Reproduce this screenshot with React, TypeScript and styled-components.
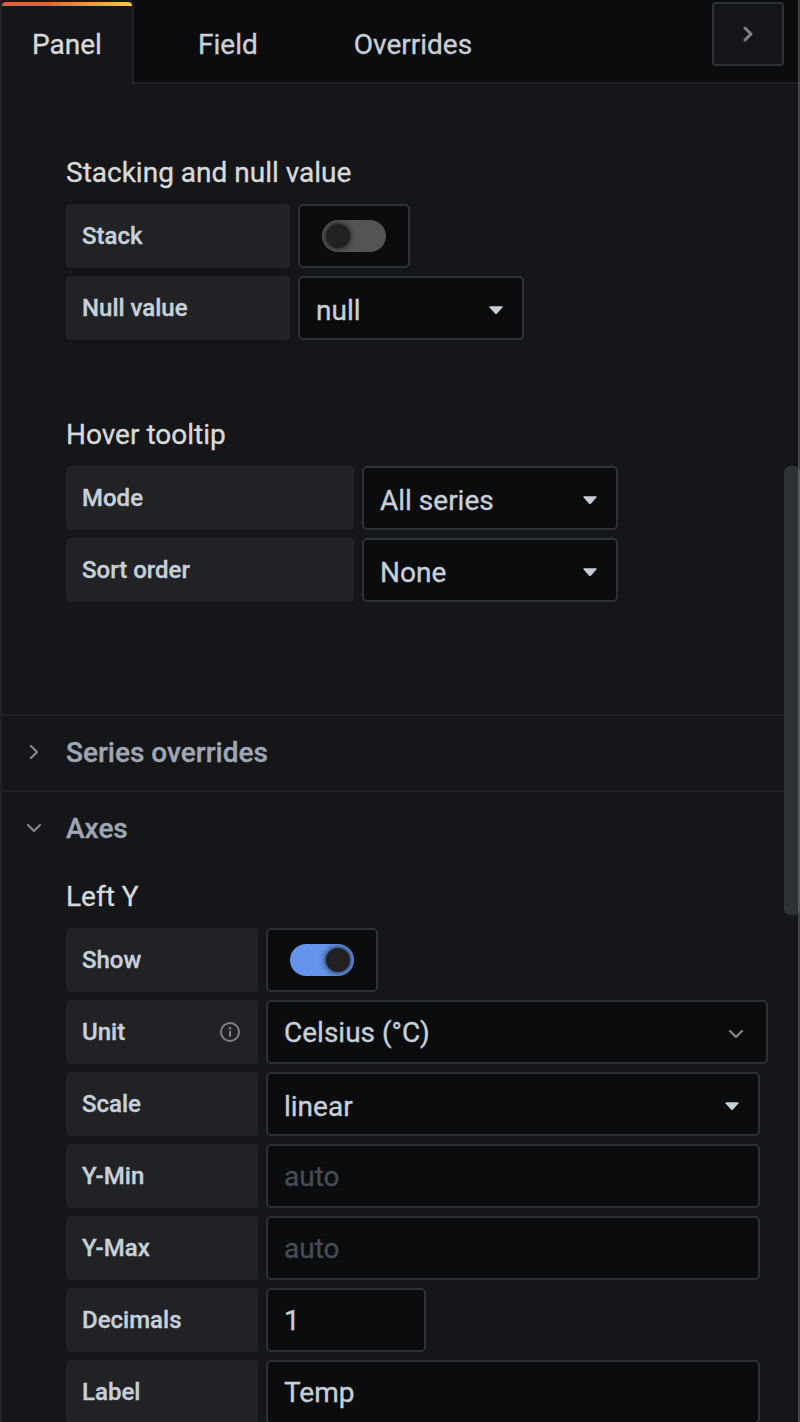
import React from 'react';
import styled, { createGlobalStyle } from 'styled-components';

const color = {
  page: '#141619',
  black: '#0b0c0e',
  raised: '#202226',
  outline: '#2c3235',
  text: '#c7d0d9',
  heading: '#d8d9da',
  muted: '#9fa7b3',
  icon: '#808287',
};

const GlobalStyle = createGlobalStyle`
  * { box-sizing: border-box; }
  html, body { margin: 0; background: ${color.page}; }
  body {
    font-family: Roboto, "Liberation Sans", sans-serif;
    font-size: 28px;
    color: ${color.text};
    -webkit-text-stroke: 0.35px currentColor;
    overflow: hidden;
  }
`;

const Pane = styled.div`
  position: relative;
  width: 800px;
  height: 1422px;
  overflow: hidden;
  display: flex;
  flex-direction: column;
  background: ${color.page};
  border-left: 2px solid ${color.raised};
`;

const TabBar = styled.header`
  flex: none;
  display: flex;
  height: 84px;
  margin-left: -2px;
  background: ${color.black};
  box-shadow: inset 0 -2px 0 ${color.raised};
`;

const Tab = styled.div<{ $active?: boolean }>`
  position: relative;
  height: 84px;
  padding: 5px 32px 0;
  margin-right: 32px;
  line-height: 79px;
  color: ${(p) => (p.$active ? color.heading : color.text)};
  ${(p) =>
    p.$active &&
    `
    width: 134px;
    padding-left: 30px;
    padding-right: 0;
    border: 2px solid ${color.raised};
    border-top: 0;
    border-bottom: 0;
    border-radius: 5px 5px 0 0;
    background: ${color.page};
    overflow: hidden;
    &::before {
      content: '';
      position: absolute;
      top: 2px;
      left: 0;
      right: 0;
      height: 4px;
      border-radius: 4px 4px 0 0;
      background: linear-gradient(to right, #e05f35 30%, #f9c93f 99%);
    }
  `}
`;

const CollapseButton = styled.button`
  display: flex;
  align-items: center;
  justify-content: center;
  width: 72px;
  height: 64px;
  margin: 2px 16px 0 auto;
  padding: 0;
  border: 2px solid ${color.outline};
  border-radius: 4px;
  background: ${color.page};
`;

const Scroller = styled.main`
  flex: 1;
  min-height: 0;
  overflow: hidden;
  padding-right: 14px;
`;

const Group = styled.section<{ $top: number; $bottom: number }>`
  padding: ${(p) => `${p.$top}px 0 ${p.$bottom}px 64px`};
`;

const GroupTitle = styled.h6`
  margin: 0;
  height: 48px;
  font-size: 28px;
  font-weight: 400;
  line-height: 34px;
  color: ${color.heading};
`;

const Row = styled.div`
  display: flex;
  gap: 8px;
  margin-bottom: 8px;
`;

const Label = styled.label<{ $width: number }>`
  display: flex;
  align-items: center;
  justify-content: space-between;
  flex: none;
  width: ${(p) => p.$width}px;
  height: 64px;
  padding: 0 16px;
  border-radius: 4px;
  background: ${color.raised};
  font-size: 24px;
  font-weight: 500;
`;

const Field = styled.div<{ $width: number; $drop?: number }>`
  display: flex;
  align-items: center;
  justify-content: space-between;
  flex: none;
  width: ${(p) => p.$width}px;
  height: 64px;
  padding: ${(p) => p.$drop ?? 0}px 16px 0;
  border: 2px solid ${color.outline};
  border-radius: 5px;
  background: ${color.black};
`;

const Placeholder = styled.span`
  color: #464c54;
`;

const SwitchBox = styled(Field)`
  justify-content: center;
`;

const Track = styled.span<{ $on?: boolean }>`
  display: flex;
  align-items: center;
  justify-content: ${(p) => (p.$on ? 'flex-end' : 'flex-start')};
  width: 64px;
  height: 32px;
  padding: 0 4px;
  border-radius: 16px;
  overflow: hidden;
  background: ${(p) => (p.$on ? '#6494eb' : '#555555')};
`;

const Knob = styled.span`
  width: 24px;
  height: 24px;
  border-radius: 50%;
  background: #212121;
  box-shadow: 0 0 6px ${color.black};
`;

const SectionHeader = styled.div`
  display: flex;
  align-items: center;
  height: 76px;
  padding-bottom: 2px;
  border-top: 2px solid ${color.raised};
  font-weight: 500;
  color: ${color.muted};
`;

const IconCell = styled.span`
  display: flex;
  justify-content: center;
  width: 64px;
`;

const ScrollThumb = styled.div`
  position: absolute;
  top: 466px;
  right: 0;
  width: 16px;
  height: 449px;
  border-radius: 6px;
  background: ${color.outline};
`;

const Edge = styled.div`
  position: absolute;
  top: 0;
  right: 0;
  width: 2px;
  height: 100%;
  background: rgba(255, 255, 255, 0.2);
`;

const Chevron = ({ down = false, bold = false }: { down?: boolean; bold?: boolean }) => (
  <svg width="16" height="16" viewBox="0 0 16 16" fill="none" stroke={color.icon}
    strokeWidth={bold ? 3 : 2.4} strokeLinecap="round" strokeLinejoin="round">
    <path d={down ? 'M2 5 8 11 14 5' : 'M5 2 11 8 5 14'} />
  </svg>
);

const Caret = () => (
  <svg width="14" height="8" viewBox="0 0 14 8" fill={color.text}>
    <path d="M1 .3H13Q14 .6 13.4 1.5L8 7.4Q7 8.4 6 7.4L.6 1.5Q0 .6 1 .3Z" />
  </svg>
);

const InfoIcon = () => (
  <svg width="20" height="20" viewBox="0 0 20 20" fill="none" stroke={color.icon} strokeWidth="2">
    <circle cx="10" cy="10" r="9" />
    <path d="M10 9.5V14" strokeLinecap="round" />
    <circle cx="10" cy="6.3" r="1.2" fill={color.icon} stroke="none" />
  </svg>
);

const InfoSlot = styled.span`
  display: flex;
  margin-right: 2px;
`;

const IndicatorSlot = styled.span<{ $right: number; $top?: number }>`
  display: flex;
  margin: ${(p) => p.$top ?? 0}px ${(p) => p.$right}px 0 0;
`;

const Select = ({ width, value }: { width: number; value: string }) => (
  <Field $width={width} $drop={4}>
    {value}
    <IndicatorSlot $right={3}><Caret /></IndicatorSlot>
  </Field>
);

const Switch = ({ on = false }: { on?: boolean }) => (
  <SwitchBox $width={112}>
    <Track $on={on}><Knob /></Track>
  </SwitchBox>
);

export default function App() {
  return (
    <>
      <GlobalStyle />
      <Pane>
        <TabBar>
          <Tab $active>Panel</Tab>
          <Tab>Field</Tab>
          <Tab>Overrides</Tab>
          <CollapseButton aria-label="Collapse"><Chevron bold /></CollapseButton>
        </TabBar>
        <Scroller>
          <Group $top={72} $bottom={70}>
            <GroupTitle>Stacking and null value</GroupTitle>
            <Row><Label $width={224}>Stack</Label><Switch /></Row>
            <Row><Label $width={224}>Null value</Label><Select width={226} value="null" /></Row>
          </Group>
          <Group $top={0} $bottom={104}>
            <GroupTitle>Hover tooltip</GroupTitle>
            <Row><Label $width={288}>Mode</Label><Select width={256} value="All series" /></Row>
            <Row><Label $width={288}>Sort order</Label><Select width={256} value="None" /></Row>
          </Group>
          <SectionHeader><IconCell><Chevron /></IconCell>Series overrides</SectionHeader>
          <SectionHeader><IconCell><Chevron down /></IconCell>Axes</SectionHeader>
          <Group $top={14} $bottom={0}>
            <GroupTitle>Left Y</GroupTitle>
            <Row><Label $width={192}>Show</Label><Switch on /></Row>
            <Row>
              <Label $width={192}>Unit<InfoSlot><InfoIcon /></InfoSlot></Label>
              <Field $width={502}>
                Celsius (°C)
                <IndicatorSlot $right={6} $top={4}><Chevron down /></IndicatorSlot>
              </Field>
            </Row>
            <Row><Label $width={192}>Scale</Label><Select width={494} value="linear" /></Row>
            <Row><Label $width={192}>Y-Min</Label><Field $width={494}><Placeholder>auto</Placeholder></Field></Row>
            <Row><Label $width={192}>Y-Max</Label><Field $width={494}><Placeholder>auto</Placeholder></Field></Row>
            <Row><Label $width={192}>Decimals</Label><Field $width={160}>1</Field></Row>
            <Row><Label $width={192}>Label</Label><Field $width={494}>Temp</Field></Row>
          </Group>
        </Scroller>
        <ScrollThumb />
        <Edge />
      </Pane>
    </>
  );
}
